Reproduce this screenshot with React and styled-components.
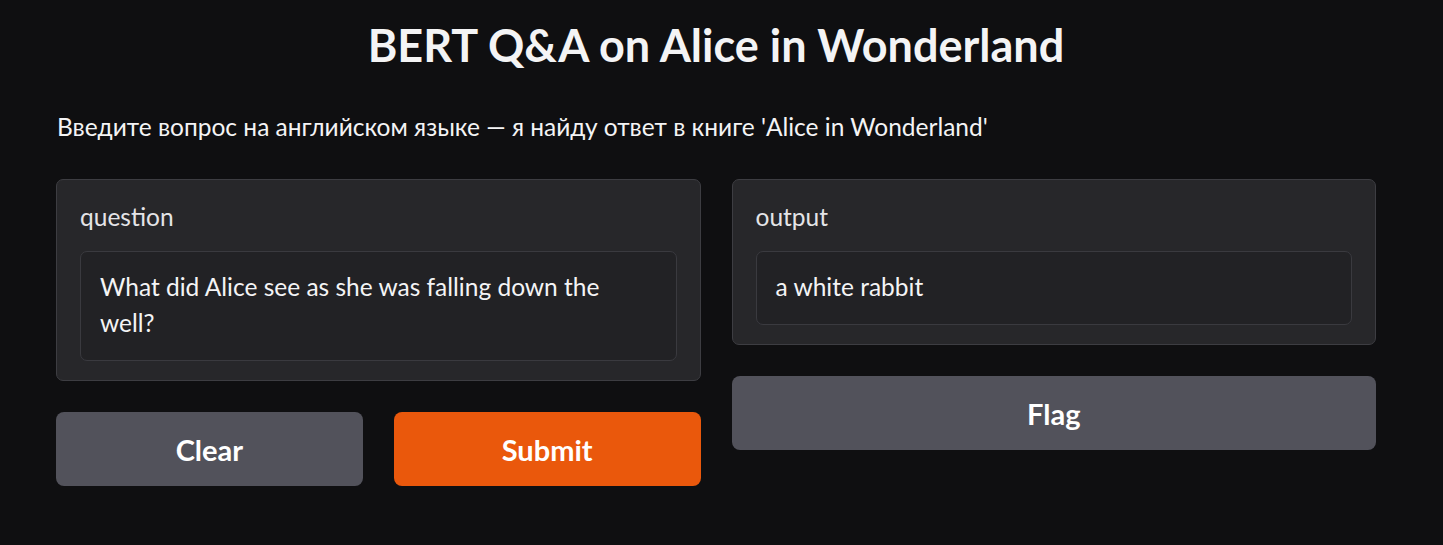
import React from "react";
import styled, { createGlobalStyle } from "styled-components";

const GlobalStyle = createGlobalStyle`
  html, body {
    margin: 0;
    padding: 0;
    background: #0f0f11;
    font-family: "Lato", "Noto Sans", sans-serif;
    color: #f4f4f5;
  }
`;

const Page = styled.div`
  width: 1320px;
  padding: 16px 0 40px 56px;
`;

const Title = styled.h1`
  margin: 0;
  text-align: center;
  font-size: 45px;
  font-weight: 700;
  line-height: 58px;
  color: #f4f4f5;
`;

const Desc = styled.p`
  margin: 37px 0 0 1px;
  font-size: 24.5px;
  line-height: 32px;
  color: #f4f4f5;
`;

const Columns = styled.div`
  display: flex;
  gap: 31px;
  margin-top: 36px;
  align-items: flex-start;
`;

const Column = styled.div`
  flex: 1;
  display: flex;
  flex-direction: column;
  gap: 31px;
`;

const Block = styled.div`
  background: #27272a;
  border: 1px solid #3d3d42;
  border-radius: 7px;
  padding: 22px 23px 19px;
`;

const Label = styled.div`
  font-size: 24.5px;
  line-height: 30px;
  margin-bottom: 19px;
  color: #e4e4e7;
`;

const Field = styled.div`
  background: #222225;
  border: 1px solid #3a3a3f;
  border-radius: 7px;
  padding: 17px 19px 19px;
  font-size: 24.5px;
  line-height: 36px;
  color: #f4f4f5;
`;

const ButtonRow = styled.div`
  display: flex;
  gap: 31px;
`;

const Button = styled.button`
  flex: 1 1 auto;
  width: 100%;
  height: 74px;
  border: none;
  border-radius: 8px;
  background: ${(p) => (p.$primary ? "#ea580c" : "#52525b")};
  color: #ffffff;
  font-family: inherit;
  font-size: 29px;
  font-weight: 700;
  cursor: pointer;
`;

export default function App() {
  return (
    <>
      <GlobalStyle />
      <Page>
        <Title>BERT Q&amp;A on Alice in Wonderland</Title>
        <Desc>
          Введите вопрос на английском языке — я найду ответ в книге 'Alice in
          Wonderland'
        </Desc>
        <Columns>
          <Column>
            <Block>
              <Label>question</Label>
              <Field>What did Alice see as she was falling down the well?</Field>
            </Block>
            <ButtonRow>
              <Button>Clear</Button>
              <Button $primary>Submit</Button>
            </ButtonRow>
          </Column>
          <Column>
            <Block>
              <Label>output</Label>
              <Field>a white rabbit</Field>
            </Block>
            <Button>Flag</Button>
          </Column>
        </Columns>
      </Page>
    </>
  );
}
